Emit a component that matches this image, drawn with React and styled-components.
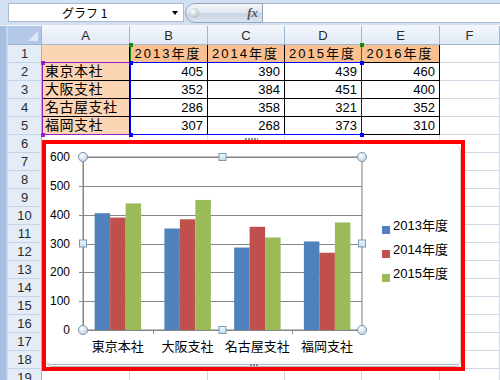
import React from 'react';
import styled, { createGlobalStyle } from 'styled-components';

const GlobalStyle = createGlobalStyle`
   html, body {
      margin: 0;
      padding: 0;
   }
   body {
      width: 500px;
      height: 380px;
      overflow: hidden;
      background: #fff;
      font-family: 'Liberation Sans', 'Noto Sans CJK JP', sans-serif;
   }
`;

const YEARS = ['2013年度', '2014年度', '2015年度', '2016年度'];
const BRANCHES = [
   { name: '東京本社', values: [405, 390, 439, 460] },
   { name: '大阪支社', values: [352, 384, 451, 400] },
   { name: '名古屋支社', values: [286, 358, 321, 352] },
   { name: '福岡支社', values: [307, 268, 373, 310] },
];
const COLS = ['A', 'B', 'C', 'D', 'E', 'F'];
const ROW_COUNT = 19;
const SERIES = [
   { label: '2013年度', color: '#4f81bd' },
   { label: '2014年度', color: '#c0504d' },
   { label: '2015年度', color: '#9bbb59' },
];

const Window = styled.div`
   width: 500px;
   height: 380px;
   overflow: hidden;
   display: flex;
   flex-direction: column;
   background: #d4e1f2;
`;

/* formula bar */
const FormulaBar = styled.div`
   height: 26px;
   box-sizing: border-box;
   display: flex;
   align-items: flex-start;
   padding: 3px 0 0 8px;
   background: #d3e0f1;
   border-bottom: 1px solid #eef3fa;
`;

const NameBox = styled.div`
   box-sizing: border-box;
   width: 176px;
   height: 19px;
   display: flex;
   align-items: center;
   padding-left: 53px;
   background: #fff;
   border: 1px solid #a7bad3;
   font-family: 'Noto Sans CJK JP', sans-serif;
   font-size: 12px;
   line-height: 17px;
   color: #000;
`;

const DropArrow = styled.span`
   margin-left: auto;
   margin-right: 5px;
   width: 0;
   height: 0;
   border-left: 3px solid transparent;
   border-right: 3px solid transparent;
   border-top: 4px solid #000;
`;

const FxPill = styled.div`
   box-sizing: border-box;
   width: 78px;
   height: 20px;
   margin-left: 1px;
   display: flex;
   align-items: center;
   padding: 0 4px 0 3px;
   border: 1px solid #8ea5c4;
   border-radius: 10px 0 0 10px;
   background: linear-gradient(#f4f7fb, #dfe6ef 50%, #c9d4e2 51%, #dbe3ee);
`;

const Knob = styled.span`
   width: 10px;
   height: 10px;
   border-radius: 50%;
   background: radial-gradient(circle at 40% 35%, #ffffff, #b9c2cc 70%, #98a3b0);
`;

const FxLabel = styled.span`
   margin-left: auto;
   font-family: 'Liberation Serif', serif;
   font-style: italic;
   font-weight: bold;
   font-size: 13px;
   color: #5a5a5a;
`;

const FormulaInput = styled.div`
   flex: 1;
   height: 20px;
   box-sizing: border-box;
   background: #fff;
   border-top: 1px solid #a7bad3;
   border-bottom: 1px solid #a7bad3;
`;

/* sheet */
const Sheet = styled.div`
   position: relative;
   flex: 1;
   display: flex;
   overflow: hidden;
`;

const LeftStrip = styled.div`
   width: 8px;
   box-sizing: border-box;
   background: linear-gradient(90deg, #a3bde0 0, #a9c2e3 70%, #d5e2f2 100%);
`;

const Grid = styled.div`
   flex: 1;
   display: grid;
   grid-template-columns: 34px 88px 78px 77px 77px 78px 1fr;
   grid-template-rows: 19px;
   grid-auto-rows: 18px;
   background: #fff;
`;

const Corner = styled.div`
   position: relative;
   box-sizing: border-box;
   background: #b3c8e6;
   border-right: 1px solid #9eb6ce;
   border-bottom: 1px solid #9eb6ce;
   &::after {
      content: '';
      position: absolute;
      right: 3px;
      bottom: 3px;
      width: 0;
      height: 0;
      border-left: 10px solid transparent;
      border-bottom: 10px solid #dde6f2;
   }
`;

const ColHead = styled.div`
   box-sizing: border-box;
   display: flex;
   align-items: center;
   justify-content: center;
   background: linear-gradient(#f3f7fc, #e1e9f5);
   border-right: 1px solid #9eb6ce;
   border-bottom: 1px solid #9eb6ce;
   font-size: 13px;
   color: #2b2b2b;
`;

const RowHead = styled.div`
   box-sizing: border-box;
   display: flex;
   align-items: center;
   justify-content: center;
   background: #e4ecf7;
   border-right: 1px solid #9eb6ce;
   border-bottom: 1px solid #c5d3e6;
   font-size: 13px;
   color: #2b2b2b;
`;

const Cell = styled.div`
   box-sizing: border-box;
   display: flex;
   align-items: center;
   justify-content: ${(p) => (p.$align === 'right' ? 'flex-end' : p.$align === 'center' ? 'center' : 'flex-start')};
   padding: 0 4px 0 3px;
   background: ${(p) => p.$fill || '#fff'};
   border-right: 1px solid ${(p) => (p.$boxed ? '#000' : '#d0d7e5')};
   border-bottom: 1px solid ${(p) => (p.$boxed ? '#000' : '#d0d7e5')};
   font-size: ${(p) => (p.$kanji ? '14px' : '13px')};
   letter-spacing: ${(p) => p.$spacing || 0}px;
   line-height: 17px;
   white-space: nowrap;
   overflow: hidden;
   color: #000;
`;

/* selection ranges drawn over the cells */
const Range = styled.div`
   position: absolute;
   left: ${(p) => p.$x}px;
   top: ${(p) => p.$y}px;
   width: ${(p) => p.$w}px;
   height: ${(p) => p.$h}px;
   box-sizing: border-box;
   border: 1px solid ${(p) => p.$color};
   border-top-color: ${(p) => (p.$sidesOnly ? 'transparent' : p.$color)};
   border-bottom-color: ${(p) => (p.$sidesOnly ? 'transparent' : p.$color)};
   pointer-events: none;
`;

const Dot = styled.span`
   position: absolute;
   width: 4px;
   height: 4px;
   background: ${(p) => p.$color};
   left: ${(p) => (p.$right ? 'auto' : '-2px')};
   right: ${(p) => (p.$right ? '-3px' : 'auto')};
   top: ${(p) => (p.$bottom ? 'auto' : '-2px')};
   bottom: ${(p) => (p.$bottom ? '-3px' : 'auto')};
`;

/* chart object */
const ChartBox = styled.div`
   position: absolute;
   left: 42px;
   top: 114px;
   width: 423px;
   height: 231px;
   box-sizing: border-box;
   border: 4px solid #ff0000;
   background: #fff;
`;

const ChartInner = styled.div`
   position: relative;
   height: 100%;
   box-sizing: border-box;
   display: flex;
   border-right: 1px solid #c5ced8;
   border-bottom: 3px double #aeb8c3;
   border-radius: 0 8px 6px 6px;
`;

const Grip = styled.span`
   position: absolute;
   left: ${(p) => p.$x}px;
   ${(p) => (p.$top ? 'top: -6px;' : 'bottom: -2px;')}
   width: ${(p) => p.$w}px;
   height: 2px;
   background: repeating-linear-gradient(90deg, #7d8a99 0 2px, transparent 2px 3px);
`;

const Plot = styled.svg`
   display: block;
   flex: none;
`;

const Legend = styled.div`
   display: flex;
   flex-direction: column;
   padding-top: 70px;
   margin-left: 6px;
`;

const LegendItem = styled.div`
   height: 24px;
   display: flex;
   align-items: center;
   font-size: 13px;
   line-height: 16px;
   color: #000;
`;

const Swatch = styled.span`
   width: 8px;
   height: 8px;
   margin: 8px 3px 0 0;
   background: ${(p) => p.$color};
`;

const PLOT = { x: 37, y: 13, w: 279, h: 173 };
const yOf = (v) => PLOT.y + PLOT.h - (v / 600) * PLOT.h;
const CAT_W = PLOT.w / 4;
const BAR_W = CAT_W / 4.5;

const Knobs = () => {
   const circles = [
      [PLOT.x, PLOT.y],
      [PLOT.x + PLOT.w, PLOT.y],
      [PLOT.x, PLOT.y + PLOT.h],
      [PLOT.x + PLOT.w, PLOT.y + PLOT.h],
   ];
   const squares = [
      [PLOT.x + PLOT.w / 2, PLOT.y],
      [PLOT.x, PLOT.y + PLOT.h / 2],
      [PLOT.x + PLOT.w, PLOT.y + PLOT.h / 2],
      [PLOT.x + PLOT.w / 2, PLOT.y + PLOT.h],
   ];
   return (
      <g>
         {circles.map(([cx, cy], i) => (
            <circle key={'c' + i} cx={cx} cy={cy} r={4.6} fill='url(#knob)' stroke='#8197b0' strokeWidth={1} />
         ))}
         {squares.map(([cx, cy], i) => (
            <rect key={'s' + i} x={cx - 3.5} y={cy - 3.5} width={7} height={7} fill='url(#sq)' stroke='#7d99b9' strokeWidth={1} />
         ))}
      </g>
   );
};

const BarChart = () => (
   <Plot width={330} height={220} viewBox='0 0 330 220'>
      <defs>
         <radialGradient id='knob' cx='40%' cy='35%' r='70%'>
            <stop offset='0' stopColor='#ffffff' />
            <stop offset='1' stopColor='#b8cde0' />
         </radialGradient>
         <linearGradient id='sq' x1='0' y1='0' x2='0' y2='1'>
            <stop offset='0' stopColor='#eef8fc' />
            <stop offset='1' stopColor='#c3e0ee' />
         </linearGradient>
      </defs>
      <rect x={PLOT.x} y={PLOT.y} width={PLOT.w} height={PLOT.h} fill='#fff' stroke='#bdbdbd' strokeWidth={2} />
      {[100, 200, 300, 400, 500, 600].map((v) => (
         <line key={v} x1={PLOT.x} x2={PLOT.x + PLOT.w} y1={Math.round(yOf(v)) + 0.5} y2={Math.round(yOf(v)) + 0.5} stroke='#868686' />
      ))}
      {BRANCHES.map((b, c) =>
         SERIES.map((s, i) => {
            const x = PLOT.x + c * CAT_W + BAR_W * 0.75 + i * BAR_W;
            const top = yOf(b.values[i]);
            return <rect key={c + '-' + i} x={x} y={top} width={BAR_W} height={PLOT.y + PLOT.h - top} fill={s.color} />;
         })
      )}
      <line x1={PLOT.x + 0.5} x2={PLOT.x + 0.5} y1={PLOT.y} y2={PLOT.y + PLOT.h} stroke='#868686' />
      <line x1={PLOT.x} x2={PLOT.x + PLOT.w} y1={PLOT.y + PLOT.h + 0.5} y2={PLOT.y + PLOT.h + 0.5} stroke='#868686' />
      {[0, 100, 200, 300, 400, 500, 600].map((v) => (
         <g key={'t' + v}>
            <line x1={PLOT.x - 4} x2={PLOT.x} y1={Math.round(yOf(v)) + 0.5} y2={Math.round(yOf(v)) + 0.5} stroke='#868686' />
            <text
               x={24}
               y={yOf(v)}
               textAnchor='end'
               dominantBaseline='central'
               fontFamily='Liberation Sans, sans-serif'
               fontSize={12}
               fill='#000'
            >
               {v}
            </text>
         </g>
      ))}
      {[0, 1, 2, 3, 4].map((i) => (
         <line
            key={'x' + i}
            x1={Math.round(PLOT.x + i * CAT_W) + 0.5}
            x2={Math.round(PLOT.x + i * CAT_W) + 0.5}
            y1={PLOT.y + PLOT.h}
            y2={PLOT.y + PLOT.h + 4}
            stroke='#868686'
         />
      ))}
      {BRANCHES.map((b, c) => (
         <text
            key={b.name}
            x={PLOT.x + (c + 0.5) * CAT_W}
            y={201}
            textAnchor='middle'
            dominantBaseline='central'
            fontFamily='Noto Sans CJK JP, sans-serif'
            fontSize={13}
            fill='#000'
         >
            {b.name}
         </text>
      ))}
      <Knobs />
   </Plot>
);

const cellFor = (r, c) => {
   const key = r + '-' + c;
   if (r === 1 && c >= 1 && c <= 4)
      return (
         <Cell key={key} $boxed $fill='#fac090' $align='center' $spacing={2}>
            {YEARS[c - 1]}
         </Cell>
      );
   if (r === 1 && c === 0) return <Cell key={key} $boxed $fill='#fcd5b4' />;
   if (r >= 2 && r <= 5) {
      const b = BRANCHES[r - 2];
      if (c === 0)
         return (
            <Cell key={key} $boxed $fill='#fcd5b4' $kanji $spacing={0.5}>
               {b.name}
            </Cell>
         );
      if (c <= 4)
         return (
            <Cell key={key} $boxed $align='right'>
               {b.values[c - 1]}
            </Cell>
         );
   }
   return <Cell key={key} />;
};

const App = () => {
   const rows = Array.from({ length: ROW_COUNT }, (_, i) => i + 1);
   return (
      <Window>
         <GlobalStyle />
         <FormulaBar>
            <NameBox>
               グラフ 1
               <DropArrow />
            </NameBox>
            <FxPill>
               <Knob />
               <FxLabel>fx</FxLabel>
            </FxPill>
            <FormulaInput />
         </FormulaBar>
         <Sheet>
            <LeftStrip />
            <Grid>
               <Corner />
               {COLS.map((c) => (
                  <ColHead key={c}>{c}</ColHead>
               ))}
               {rows.map((r) => (
                  <React.Fragment key={r}>
                     <RowHead>{r}</RowHead>
                     {COLS.map((_, c) => cellFor(r, c))}
                  </React.Fragment>
               ))}
            </Grid>

            <Range $x={42} $y={36} $w={89} $h={73} $color='#9b1fbf'>
               <Dot $color='#9b1fbf' />
               <Dot $color='#9b1fbf' $bottom />
               <Dot $color='#9b1fbf' $right $bottom />
            </Range>
            <Range $x={130} $y={18} $w={232} $h={19} $color='#138a13' $sidesOnly>
               <Dot $color='#138a13' />
               <Dot $color='#138a13' $right />
            </Range>
            <Range $x={130} $y={36} $w={232} $h={73} $color='#0000ff'>
               <Dot $color='#0000ff' />
               <Dot $color='#0000ff' $right />
               <Dot $color='#0000ff' $bottom />
               <Dot $color='#0000ff' $right $bottom />
            </Range>

            <ChartBox>
               <ChartInner>
                  <Grip $top $x={199} $w={13} />
                  <BarChart />
                  <Legend>
                     {SERIES.map((s) => (
                        <LegendItem key={s.label}>
                           <Swatch $color={s.color} />
                           {s.label}
                        </LegendItem>
                     ))}
                  </Legend>
                  <Grip $x={204} $w={8} />
               </ChartInner>
            </ChartBox>
         </Sheet>
      </Window>
   );
};

export default App;
